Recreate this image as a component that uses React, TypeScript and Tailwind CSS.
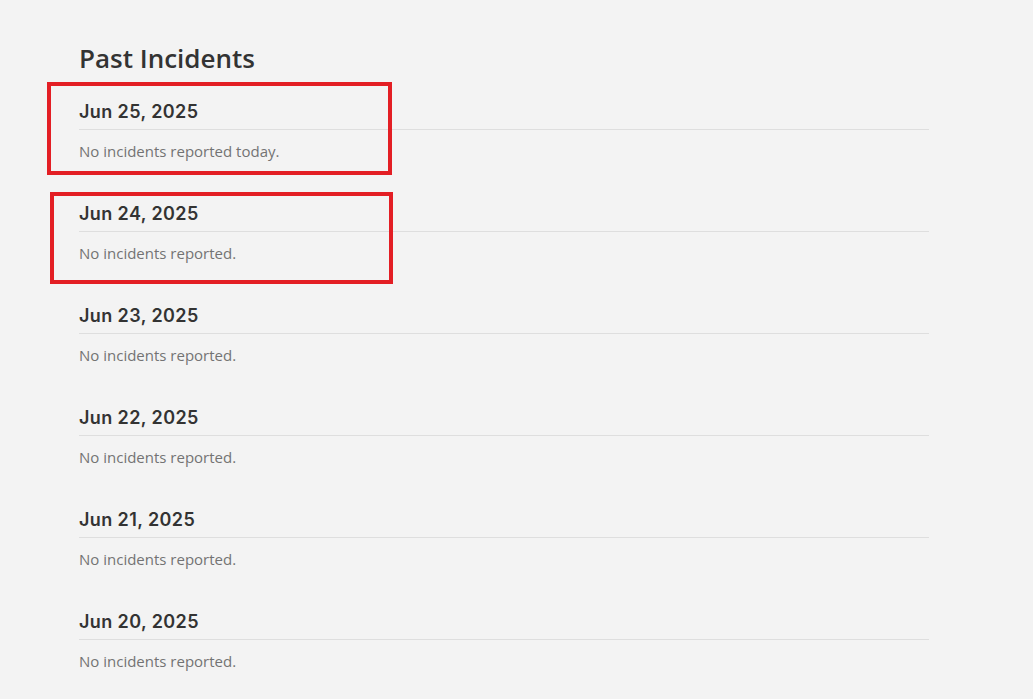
const days = [
  { date: "Jun 25, 2025", note: "No incidents reported today." },
  { date: "Jun 24, 2025", note: "No incidents reported." },
  { date: "Jun 23, 2025", note: "No incidents reported." },
  { date: "Jun 22, 2025", note: "No incidents reported." },
  { date: "Jun 21, 2025", note: "No incidents reported." },
  { date: "Jun 20, 2025", note: "No incidents reported." },
];

export default function App() {
  return (
    <main
      className="relative min-h-[699px] bg-[#f3f3f3] pl-[79px] pt-[43px]"
      style={{ fontFamily: "'Open Sans', 'Liberation Sans', sans-serif" }}
    >
      <div className="w-[850px]">
        <h2 className="text-[26px] leading-[31px] font-semibold text-[#333333]">Past Incidents</h2>
        <div className="mt-[26px] flex flex-col gap-[40px]">
          {days.map((day) => (
            <div key={day.date}>
              <h3
                className="border-b border-[#dedede] pb-[5px] text-[18px] leading-[24px] font-semibold tracking-[0.4px] text-[#333333]"
                style={{ fontFamily: "Inter, 'Open Sans', sans-serif" }}
              >
                {day.date}
              </h3>
              <p className="mt-[10px] text-[15px] leading-[22px] text-[#737373]">{day.note}</p>
            </div>
          ))}
        </div>
      </div>

      {/* annotation boxes */}
      <div className="pointer-events-none absolute left-[47px] top-[82px] h-[93px] w-[345px] border-[4px] border-[#e31e24]" />
      <div className="pointer-events-none absolute left-[50px] top-[192px] h-[92px] w-[343px] border-[4px] border-[#e31e24]" />
    </main>
  );
}
